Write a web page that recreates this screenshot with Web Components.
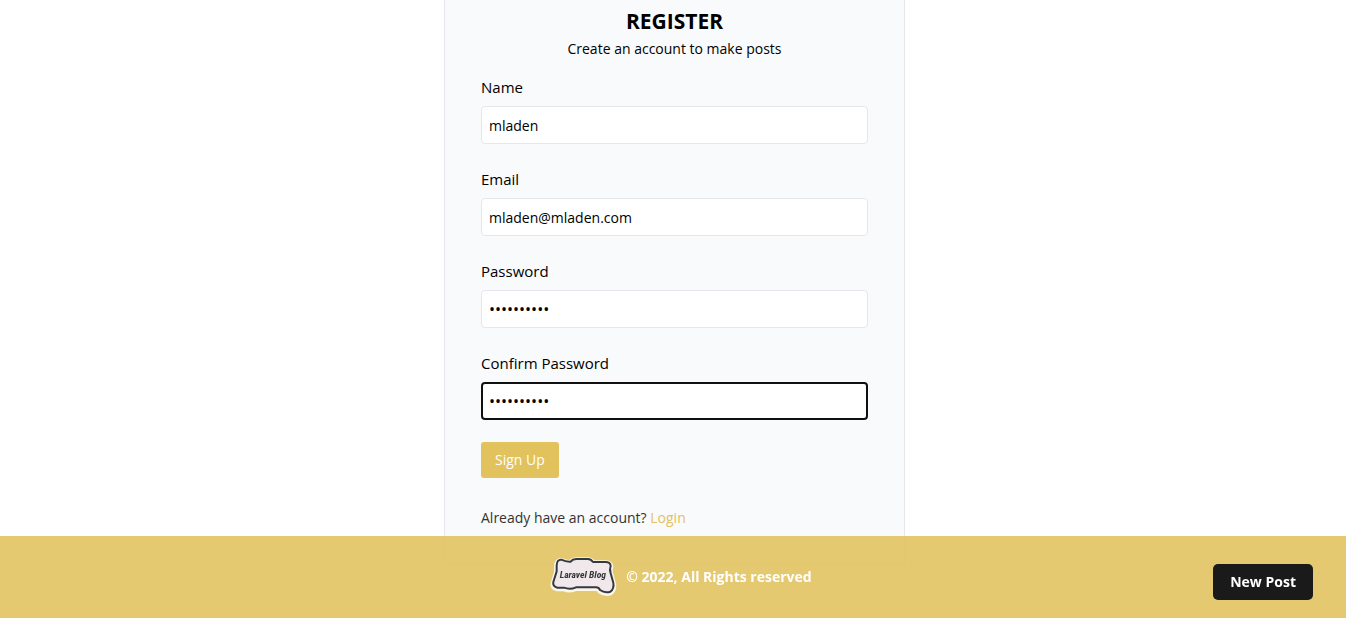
<!DOCTYPE html>
<html lang="en">
<head>
<meta charset="utf-8">
<meta name="viewport" content="width=device-width, initial-scale=1">
<title>Register - Laravel Blog</title>
<style>
body { margin: 0; background: #fff; color: #000; font: 14px/20px "Open Sans", "Noto Sans", sans-serif; }
</style>
</head>
<body>
<register-page></register-page>
<site-footer></site-footer>

<template id="field-template">
<style>
:host { display: block; margin-bottom: 22px; }
label { display: block; font-size: 15px; line-height: 24px; margin-bottom: 7px; padding-top: 1px; }
input { display: block; box-sizing: border-box; width: 100%; height: 38px; margin: 0; padding: 0 7px; border: 1px solid #e5e7eb; border-radius: 4px; background: #fff; color: #000; font: inherit; outline: none; }
input[type="password"] { font-size: 16px; }
:host([active]) input { border: 2px solid #101010; padding: 0 6px; }
</style>
<label for="control"></label>
<input id="control">
</template>

<template id="page-template">
<style>
:host { display: block; padding: 0 0 54px 3px; }
main { box-sizing: border-box; max-width: 461px; margin: 0 auto; padding: 5px 36px 36px; background: #f9fafc; border: solid #e5e7eb; border-width: 0 1px 1px; }
header { text-align: center; margin-bottom: 13px; }
h1 { margin: 0; font-size: 21px; line-height: 32px; font-weight: 700; }
p { margin: 0; }
header p { line-height: 24px; }
button { display: block; height: 36px; margin: 0 0 30px; padding: 0 14px; border: 0; border-radius: 3px; background: #e2c25d; color: #fff; font: inherit; font-weight: 500; }
.login { color: #333; }
a { color: #e2c25d; font-weight: 500; text-decoration: none; }
</style>
<main>
<header><h1>REGISTER</h1><p>Create an account to make posts</p></header>
<form>
<form-field label="Name" type="text" value="mladen"></form-field>
<form-field label="Email" type="email" value="mladen@mladen.com"></form-field>
<form-field label="Password" type="password" value="mladen1234"></form-field>
<form-field label="Confirm Password" type="password" value="mladen1234" active></form-field>
<button type="submit">Sign Up</button>
<p class="login">Already have an account? <a href="#login">Login</a></p>
</form>
</main>
</template>

<template id="logo-template">
<style>
:host { display: block; }
svg { display: block; }
.halo { fill: none; stroke: #fbf5ea; stroke-width: 16; stroke-linejoin: round; filter: blur(2px); }
.badge { fill: #f0e8ea; stroke: #333b40; stroke-width: 6; stroke-linejoin: round; }
text { font-family: "Roboto Condensed", Roboto, "Liberation Sans", sans-serif; font-size: 29px; font-style: italic; font-weight: 700; fill: #33363b; }
</style>
<svg width="72" height="46" viewBox="0 0 216 138" role="img" aria-label="Laravel Blog">
<defs><path id="outline" d="M26 34Q27 16 40 17Q54 24 68 23Q74 15 86 15H120Q129 15 135 24H170Q188 23 188 36Q184 46 188 58L196 86Q199 105 187 113Q170 118 156 108Q152 99 142 100H84Q66 108 48 101H28Q13 97 16 84L26 52Z"/></defs>
<use class="halo" href="#outline" y="3"/>
<use class="badge" href="#outline"/>
<text x="35" y="71">Laravel Blog</text>
</svg>
</template>

<template id="footer-template">
<style>
:host { position: fixed; inset: auto 0 0; display: grid; grid-template-columns: 1fr auto 1fr; align-items: center; box-sizing: border-box; height: 82px; padding: 0 33px 0 47px; background: rgb(226 195 96 / .9); color: #fff; font-weight: 700; }
.brand { grid-column: 2; display: flex; align-items: center; gap: 6px; }
button { grid-column: 3; justify-self: end; height: 36px; margin-top: 10px; padding: 0 17px; border: 0; border-radius: 5px; background: #1a1a1a; color: #fff; font: inherit; }
</style>
<div class="brand"><blog-logo></blog-logo><span>© 2022, All Rights reserved</span></div>
<button type="button">New Post</button>
</template>

<script>
class TemplateElement extends HTMLElement {
  constructor() {
    super();
    const template = document.getElementById(this.constructor.template);
    this.attachShadow({ mode: "open" }).append(template.content.cloneNode(true));
  }
}
class FormField extends TemplateElement {
  static template = "field-template";
  connectedCallback() {
    const input = this.shadowRoot.querySelector("input");
    this.shadowRoot.querySelector("label").textContent = this.getAttribute("label");
    input.type = this.getAttribute("type");
    input.value = this.getAttribute("value");
  }
}
class BlogLogo extends TemplateElement { static template = "logo-template"; }
class RegisterPage extends TemplateElement { static template = "page-template"; }
class SiteFooter extends TemplateElement { static template = "footer-template"; }
customElements.define("form-field", FormField);
customElements.define("blog-logo", BlogLogo);
customElements.define("register-page", RegisterPage);
customElements.define("site-footer", SiteFooter);
</script>
</body>
</html>
